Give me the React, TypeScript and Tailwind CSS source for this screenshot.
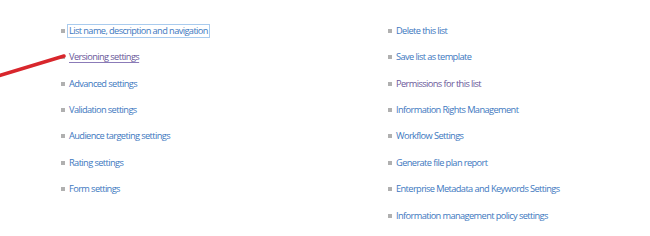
import React from 'react'

type Item = { label: string; visited?: boolean; underline?: boolean; focused?: boolean }

const LEFT: Item[] = [
  { label: 'List name, description and navigation', focused: true },
  { label: 'Versioning settings', visited: true, underline: true },
  { label: 'Advanced settings' },
  { label: 'Validation settings' },
  { label: 'Audience targeting settings' },
  { label: 'Rating settings' },
  { label: 'Form settings' },
]

const RIGHT: Item[] = [
  { label: 'Delete this list' },
  { label: 'Save list as template' },
  { label: 'Permissions for this list', visited: true },
  { label: 'Information Rights Management' },
  { label: 'Workflow Settings' },
  { label: 'Generate file plan report' },
  { label: 'Enterprise Metadata and Keywords Settings' },
  { label: 'Information management policy settings' },
]

function LinkRow({ item }: { item: Item }) {
  return (
    <li className="flex items-center h-[26.43px]">
      <span className="w-[4px] h-[4px] bg-[#b0b0b0] flex-none mr-[4px]" />
      <a
        href="#"
        className={
          item.focused
            ? 'text-[#3d78c0] border border-[#a9cbee] px-[1px] -ml-[2px] leading-[12px]'
            : item.visited
              ? item.underline
                ? 'text-[#6a5799] underline underline-offset-2 decoration-[#8b7bb8]'
                : 'text-[#6a5799]'
              : 'text-[#3d78c0]'
        }
      >
        {item.label}
      </a>
    </li>
  )
}

export default function App() {
  return (
    <div
      className="relative w-[650px] h-[236px] bg-white overflow-hidden text-[9.25px] tracking-[-0.6px]"
      style={{ fontFamily: '"Open Sans", "Noto Sans", sans-serif' }}
    >
      <div className="flex pt-[17.5px]">
        <ul className="w-[388px] pl-[61px]">
          {LEFT.map(i => <LinkRow key={i.label} item={i} />)}
        </ul>
        <ul className="flex-1">
          {RIGHT.map(i => <LinkRow key={i.label} item={i} />)}
        </ul>
      </div>

      {/* red annotation arrow */}
      <svg className="absolute left-0 top-0" width="80" height="90" viewBox="0 0 80 90">
        <path d="M-2 76 L64 56" stroke="#d8262c" strokeWidth="3.5" strokeLinecap="round" fill="none" />
      </svg>
    </div>
  )
}
